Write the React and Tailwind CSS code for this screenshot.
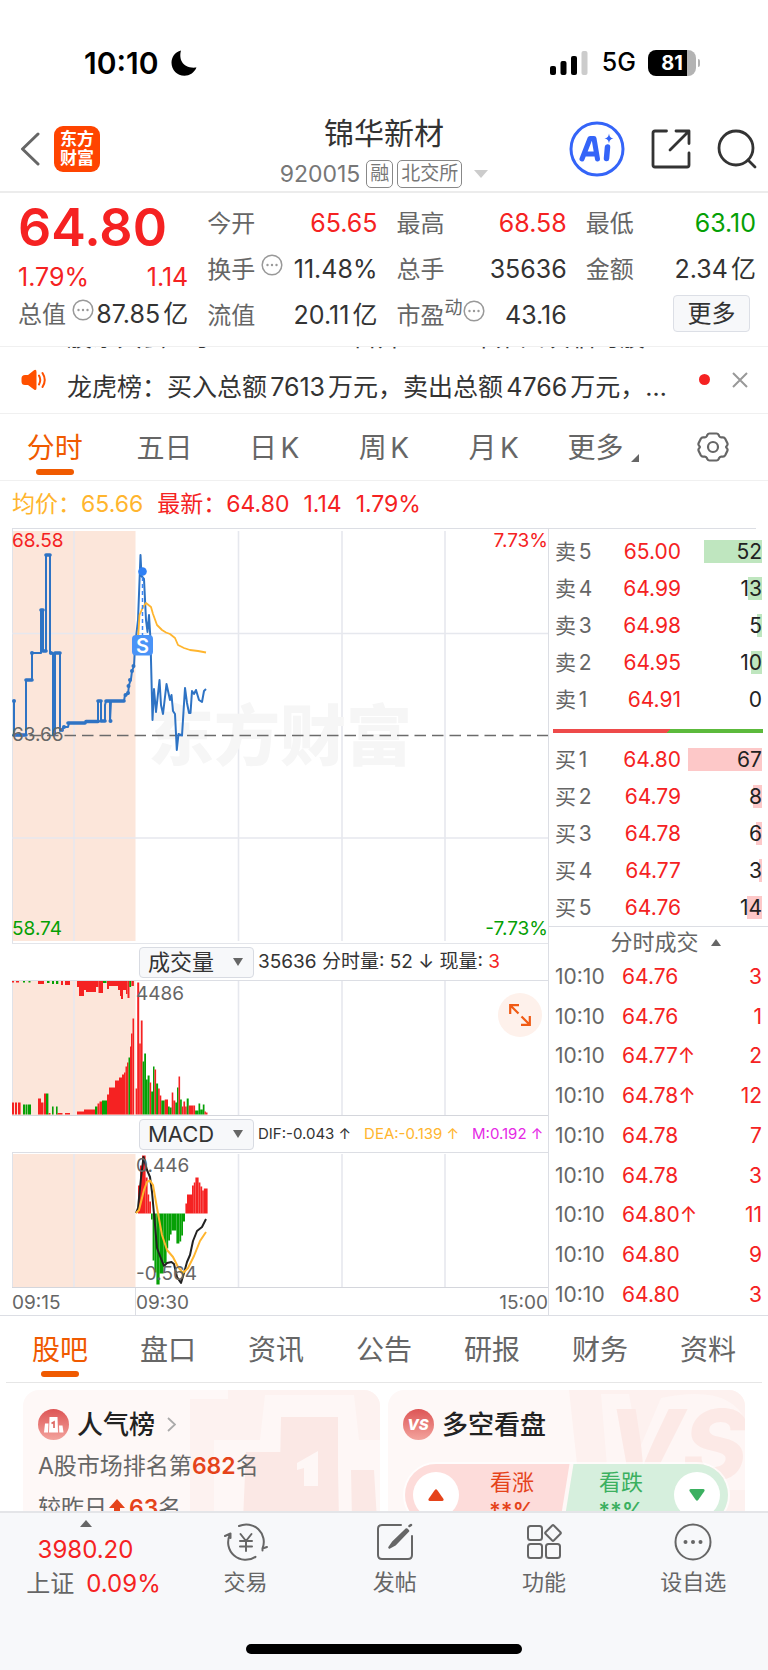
import React from 'react';

const R = '#f52222';
const G = '#05a005';

const sells = [
  ['5', '65.00', 52, 58],
  ['4', '64.99', 13, 14],
  ['3', '64.98', 5, 5],
  ['2', '64.95', 10, 11],
  ['1', '64.91', 0, 0],
];
const buys = [
  ['1', '64.80', 67, 74],
  ['2', '64.79', 8, 9],
  ['3', '64.78', 6, 6],
  ['4', '64.77', 3, 3],
  ['5', '64.76', 14, 15],
];
const ticks = [
  ['64.76', false, 3],
  ['64.76', false, 1],
  ['64.77', true, 2],
  ['64.78', true, 12],
  ['64.78', false, 7],
  ['64.78', false, 3],
  ['64.80', true, 11],
  ['64.80', false, 9],
  ['64.80', false, 3],
];

// [x, width, height, colour]
const volume = [
  [12, 2, 12, R], [15, 2, 12, R], [18, 2.6, 12, R],
  [23, 2, 10, G], [25.5, 2, 10, G], [28, 3, 10, G],
  [38, 3, 16, R], [41, 2.5, 12, R], [44, 2, 21, R], [46, 2.4, 21, G], [48.5, 2, 1.5, R],
  [52, 1.6, 8, G], [56, 1.6, 8, G], [57.5, 5, 1.5, R], [65, 5, 1.5, R],
  [77, 7, 3, R], [84, 11, 5, R], [95, 2.5, 8, G], [97.5, 2, 11, R], [99.5, 3, 13, R],
  [102, 5, 14, G], [107, 2, 20, R], [109, 6, 27, R], [115, 4, 34, R], [119, 3, 37, R],
  [122, 2, 40, R], [124, 1.5, 42, R], [125.5, 1.5, 48, R], [127, 1.5, 52, R], [128.5, 1.5, 57, G],
  [130, 1, 68, R], [131, 1.5, 81, R], [132.5, 1.6, 96, R],
  [135.6, 1.6, 26, R], [137.2, 2, 132, R], [139.2, 1.6, 71, R], [140.8, 1.8, 94, R],
  [142.6, 1.6, 53, G], [144.2, 1.8, 61, G], [146, 1.6, 35, G], [147.6, 2, 39, G],
  [149.6, 1.6, 32, R], [151.2, 1.8, 23, G], [153, 1.5, 48, G], [154.5, 1.6, 45, R],
  [156.1, 2, 31, G], [158.1, 1.6, 26, R], [159.7, 1.6, 19, R], [161.3, 3.4, 14, G],
  [164.7, 3.3, 15, R], [168, 1.7, 8, G], [169.7, 2, 7, G], [171.7, 1.6, 22, R],
  [173.3, 2, 14, R], [175.3, 1.7, 12, G], [177, 1.5, 27, G], [178.5, 1.6, 38, R],
  [180.1, 1.7, 15, G], [181.8, 1.6, 8, R], [183.4, 1.7, 13, R], [185.1, 1.6, 8, R],
  [186.7, 2, 16, G], [188.7, 4.6, 9, R], [193.3, 1.8, 9, R], [195.1, 3.4, 4, G],
  [198.5, 1.7, 11, G], [200.2, 2.6, 5, G], [202.8, 1.7, 10, G], [204.5, 1.4, 3, R], [205.9, 1.6, 2, R],
];
const hanging = [
  [12, 2, 1.5, R], [16, 3, 1.5, R], [23, 2, 1.5, G], [28.5, 2, 1.5, G], [38, 6, 3, R],
  [47, 2.5, 2, G], [52, 2, 3, G], [56, 2.3, 3, G], [61, 2, 4, R], [65, 5, 4, R],
  [77, 2, 6, R], [79, 5, 15, R], [84, 2, 9, R], [86, 10, 11, R], [96, 2.5, 6, R],
  [98.5, 4.5, 12, R], [103, 3.5, 2, G], [107, 2, 8, R], [109, 9, 5, R], [118, 2, 9, R],
  [120, 1, 15, R], [121, 2, 18, R], [123, 3, 9, R], [126, 1.5, 13, R], [127.5, 2, 17, R],
  [129.3, 1.8, 6, G], [131.4, 2.5, 5, R],
];
const macd = [
  [138, 2, 28, R], [140, 2, 48, R], [142, 3.6, 58, R], [145.6, 2, 36, R], [147.6, 1.6, 19, R], [149.2, 1.8, 12, R],
  [151, 1.6, -6, G], [152.6, 1.8, -47, G], [154.4, 2, -59, G], [156.4, 3.2, -71, G], [159.6, 4, -60, G],
  [163.6, 3, -50, G], [166.6, 1.6, -35, G], [168.2, 1.8, -27, G], [170, 1.6, -21, G], [171.6, 4.8, -17, G],
  [176.4, 3, -30, G], [179.4, 1.8, -28, G], [181.2, 1.8, -22, G], [183, 2, -8, G],
  [185.4, 1.6, 10, R], [187, 5, 19, R], [192, 1.8, 28, R], [193.8, 1.6, 31, R], [195.4, 3.2, 36, R],
  [198.6, 1.8, 31, R], [200.4, 1.8, 27, R], [202.2, 1.6, 23, R], [203.8, 3.8, 25, R],
];

const Grid = ({ y1, y2 }) => (
  <g>
    <rect x="12" y={y1} width="123.5" height={y2 - y1} fill="#fce6da" />
    {[74, 238.5, 342, 445].map((x) => (
      <line key={x} x1={x} x2={x} y1={y1} y2={y2} stroke="#e6e8ee" strokeWidth="1.6" />
    ))}
    <line x1="12.5" x2="12.5" y1={y1 - 2} y2={y2 + 2} stroke="#e0e2e8" />
  </g>
);

function More() {
  return (
    <svg viewBox="0 0 22 22" className="mb-3 size-[22px] shrink-0" fill="none" stroke="#999" strokeWidth="1.5">
      <circle cx="11" cy="11" r="9.8" />
      <g fill="#999" stroke="none"><circle cx="6.5" cy="11" r="1.2" /><circle cx="11" cy="11" r="1.2" /><circle cx="15.5" cy="11" r="1.2" /></g>
    </svg>
  );
}

function Stat({ label, value, color = 'text-[#333]', more, sup }) {
  return (
    <div className="flex h-[46px] items-center whitespace-nowrap">
      <span className="text-[#666]">{label}</span>
      {sup && <span className="mb-4 text-lg text-[#666]">{sup}</span>}
      {more && <span className={sup ? 'mt-0.5' : 'ml-1.5 mt-0.5'}><More /></span>}
      <span className={`ml-auto text-[25px] ${color}`}>{value}</span>
    </div>
  );
}

function StatusBar() {
  return (
    <div className="flex h-24 items-center justify-between pt-[30px] pr-17 pl-[84px]">
      <div className="flex items-center gap-3 text-[30px] font-semibold text-black">
        <span>10:10</span>
        <svg viewBox="0 0 26 26" className="size-[26px]"><path d="M10 0.5C7.500 9 11.500 19 25.500 17.500C23 23 18.500 25.700 13.500 25.700C6 25.700 0.500 20 0.500 12.800C0.500 7 4 2 10 0.500Z" /></svg>
      </div>
      <div className="flex items-center text-black">
        <svg viewBox="0 0 38 24" className="mr-3.5 h-6 w-[38px]">
          <rect x="0" y="15" width="6" height="9" rx="2" /><rect x="10.500" y="10" width="6" height="14" rx="2" />
          <rect x="21" y="5" width="6" height="19" rx="2" /><rect x="31.500" y="0" width="6" height="24" rx="2" fill="#ccc" />
        </svg>
        <span className="mr-3 text-[25px] font-medium">5G</span>
        <div className="flex items-center">
          <span className="flex h-[26px] w-[48px] items-center justify-center rounded-lg bg-[linear-gradient(90deg,#000_81%,#b3b3b3_81%)] text-xl font-bold text-white">81</span>
          <span className="ml-0.5 h-2 w-0.5 rounded-r bg-[#b3b3b3]" />
        </div>
      </div>
    </div>
  );
}

function Header() {
  return (
    <header className="grid h-[97px] grid-cols-[1fr_auto_1fr] border-b-2 border-[#ececec]">
      <div className="flex items-center gap-3.5 pt-[11px] pl-5">
        <button aria-label="返回">
          <svg viewBox="0 0 20 34" className="h-[34px] w-5" fill="none" stroke="#666" strokeWidth="3" strokeLinecap="round" strokeLinejoin="round"><path d="M18 2 2.500 17 18 32" /></svg>
        </button>
        <a href="#home" className="flex size-[46px] flex-col items-center justify-center rounded-[9px] bg-[#ff4400] text-[17px] leading-[19px] font-bold text-white"><span>东方</span><span>财富</span></a>
      </div>
      <div className="flex flex-col items-center pt-[17px]">
        <h1 className="text-[30px] leading-10 text-[#333]">锦华新材</h1>
        <div className="mt-[7px] flex h-7 items-center text-[#777]">
          <span className="mr-1.5 text-[23px]">920015</span>
          <span className="mr-1 flex h-7 items-center rounded-[5px] border border-[#888] px-[3px] text-[19px]">融</span>
          <span className="mr-3 flex h-7 items-center rounded-[5px] border border-[#888] px-[3px] text-[19px]">北交所</span>
          <svg viewBox="0 0 14 8" className="h-2 w-3.5" fill="#ccc"><path d="M0 0H14L7 8Z" /></svg>
        </div>
      </div>
      <div className="flex items-center justify-end gap-[26px] pt-[11px] pr-[11px]">
        <button aria-label="Ai">
          <svg viewBox="0 0 56 56" className="size-14" fill="none" stroke="#3464f8">
            <circle cx="28" cy="28" r="26" strokeWidth="3" />
            <path d="M13 38 21 17.500H25L28.500 38M16 33H27" strokeWidth="5" strokeLinejoin="round" strokeLinecap="round" />
            <path d="M38.500 26 37.500 37.500" strokeWidth="5.500" strokeLinecap="round" />
            <path d="M40 12.500C40.700 16 41.500 16.800 44.500 17.500C41.500 18.200 40.700 19 40 22.500C39.300 19 38.500 18.200 35.500 17.500C38.500 16.800 39.300 16 40 12.500Z" fill="#3464f8" stroke="none" />
          </svg>
        </button>
        <button aria-label="分享">
          <svg viewBox="0 0 40 40" className="size-10" fill="none" stroke="#333" strokeWidth="2.800" strokeLinecap="round" strokeLinejoin="round">
            <path d="M15.500 2H4Q2 2 2 4V36Q2 38 4 38H36Q38 38 38 36V24M19 21 37.500 2.500M25 2H38V14.500" />
          </svg>
        </button>
        <button aria-label="搜索">
          <svg viewBox="0 0 40 40" className="size-10" fill="none" stroke="#333" strokeWidth="2.800" strokeLinecap="round"><circle cx="19" cy="19" r="17" /><path d="M31 31 38 38" /></svg>
        </button>
      </div>
    </header>
  );
}

function Quote() {
  return (
    <section className="grid grid-cols-4 gap-x-[19px] border-b border-[#f0f0f0] pr-3 pb-[7px] pl-[18px] text-2xl">
      <div className="flex flex-col pt-[7px] whitespace-nowrap">
        <div className="h-14 text-[52px] leading-14 font-semibold text-[#f52222]">64.80</div>
        <div className="flex h-11 items-center justify-between text-[25px] text-[#f52222]"><span>1.79%</span><span>1.14</span></div>
        <div className="-mt-2 flex h-[46px] items-center">
          <span className="text-[#666]">总值</span><span className="mt-0.5 ml-1.5"><More /></span><span className="ml-auto text-[25px] text-[#333]">87.85亿</span>
        </div>
      </div>
      <div className="pt-2"><Stat label="今开" value="65.65" color="text-[#f52222]" /><Stat label="换手" more value="11.48%" /><Stat label="流值" value="20.11亿" /></div>
      <div className="pt-2"><Stat label="最高" value="68.58" color="text-[#f52222]" /><Stat label="总手" value="35636" /><Stat label="市盈" sup="动" more value="43.16" /></div>
      <div className="pt-2">
        <Stat label="最低" value="63.10" color="text-[#05a005]" /><Stat label="金额" value="2.34亿" />
        <div className="flex h-[46px] items-start justify-end pt-0.5 pr-1.5"><button className="h-[37px] w-[77px] rounded-[4px] border border-[#dcdfe6] bg-[#f7f8fa] text-2xl leading-8 text-[#333]">更多</button></div>
      </div>
    </section>
  );
}

function News() {
  return (
    <section className="flex h-[67px] items-start border-b border-[#f0f0f0] pr-5 pl-5 text-[#333]">
      <svg viewBox="0 0 28 22" className="mt-[22px] h-[22px] w-7 shrink-0" fill="#ff5000">
        <path d="M5 6H8L14 1.200Q16.500 0 16.500 3V19Q16.500 22 14 20.500L8 16H5Q1.500 16 1.500 12.500V9.500Q1.500 6 5 6Z" />
        <path d="M19 6.500Q21.500 11 19 15.500M22.500 4Q27 11 22.500 18" fill="none" stroke="#ff5000" strokeWidth="2" strokeLinecap="round" />
      </svg>
      <div className="ml-[19px] flex h-[66px] min-w-0 flex-1 flex-col justify-end overflow-hidden text-[25px] whitespace-nowrap">
        <p className="h-6 leading-6">股东大会：于2025-11-17召开2025年第四次临时股</p>
        <p className="mt-5 mb-2 h-9 shrink-0 leading-9">龙虎榜：买入总额7613万元，卖出总额4766万元，…</p>
      </div>
      <span className="mt-[27px] ml-2 size-[11px] rounded-full bg-[#f52222]" />
      <button aria-label="关闭" className="mt-[25px] ml-[22px]"><svg viewBox="0 0 16 16" className="size-4" stroke="#999" strokeWidth="2"><path d="M1 1 15 15M15 1 1 15" /></svg></button>
    </section>
  );
}

function Tab({ active, children }) {
  return (
    <button className={`flex flex-col items-center justify-end text-[28px] leading-9 ${active ? 'text-[#f05a00]' : 'text-[#666]'}`}>
      <span className="flex">{children}</span>
      <span className={`mt-[3px] mb-[5px] h-1.5 w-[38px] rounded-full ${active ? 'bg-[#f05a00]' : ''}`} />
    </button>
  );
}

function PeriodTabs() {
  return (
    <nav className="grid h-[67px] grid-cols-7 border-b border-[#f0f0f0]">
      <Tab active>分时</Tab><Tab>五日</Tab><Tab>日K</Tab><Tab>周K</Tab><Tab>月K</Tab>
      <Tab>更多<svg viewBox="0 0 8 8" className="mt-6 ml-2 size-2" fill="#666"><path d="M8 0V8H0Z" /></svg></Tab>
      <button aria-label="设置" className="flex items-center justify-center">
        <svg viewBox="0 0 32 30" className="h-[30px] w-8" fill="none" stroke="#666" strokeWidth="2.200" strokeLinejoin="round">
          <path d="M12.500 1.500H19.500Q21 1.500 21.700 3L22.300 4.300Q23 5.500 24.500 5.400L26 5.400Q27.500 5.400 28.200 6.700L30.300 11Q31 12.500 30 13.600L29.500 14.200Q28.800 15 29.500 15.800L30 16.400Q31 17.500 30.300 19L28.200 23.300Q27.500 24.600 26 24.600L24.500 24.600Q23 24.500 22.300 25.700L21.700 27Q21 28.500 19.500 28.500H12.500Q11 28.500 10.300 27L9.700 25.700Q9 24.500 7.500 24.600L6 24.600Q4.500 24.600 3.800 23.300L1.700 19Q1 17.500 2 16.400L2.500 15.800Q3.200 15 2.500 14.200L2 13.600Q1 12.500 1.700 11L3.800 6.700Q4.500 5.400 6 5.400L7.500 5.400Q9 5.500 9.700 4.300L10.300 3Q11 1.500 12.500 1.500Z" />
          <circle cx="16" cy="15" r="5" />
        </svg>
      </button>
    </nav>
  );
}

function PriceChart() {
  return (
    <div className="relative h-[415px] border-b border-[#e3e5ea] text-[19px] leading-5">
      <svg viewBox="12 529 536 414" preserveAspectRatio="none" className="block size-full">
        <Grid y1={531} y2={941} />
        <text x="148" y="760" fontSize="66" fontWeight="900" fill="#f6f6f6" fontFamily="Noto Sans CJK SC">东方财富</text>
        <path d="M12 633.500H548M12 838H548" stroke="#e6e8ee" strokeWidth="1.6" />
        <path d="M12 735.500H548" stroke="#6b6b6b" strokeWidth="1.300" strokeDasharray="11.500 6" />
        <path
          d="M14 701V735H26V680H32V653H41V610H43V651H46V555H50V653H53V735H55V653H60V731L64 727H68L69 723H85L88 721H98V701H101V721H105V705L106 701H110V721L111 701H124L125 695L128 694L129 685L131 679L132 671L134 666L135 646L138 620L140.500 555L141.500 576L144 579L146 620L147.500 632L149 615L150.500 640L152.500 720L154 689L156 712L159.500 680L161 705L163 714L166.500 684L170 700L171.500 695L173 711L175 714L176.800 750L178.500 734L182 735.500L185 688L187 703L189 713H190.500L192 691L194 694L196 690L199 700L202 702L204 691L206 689"
          fill="none" stroke="#2e73c4" strokeWidth="2" strokeLinejoin="round"
        />
        <path d="M14 735H26M26 680H32M41 610H43M43 651H46M46 555H50M55 653H60M68 723H85M86 721.500H98M98 701H101M101 721H105M106 701H124" stroke="#2e73c4" strokeWidth="3.600" strokeLinecap="round" />
        <g fill="#2e73c4">{[[14, 701], [32, 653], [51, 653], [110.500, 721], [62, 730], [64, 727], [125.500, 695], [128, 693], [128.500, 686], [130, 680], [132, 671], [133.500, 666]].map(([x, y]) => <circle key={`${x}-${y}`} cx={x} cy={y} r="2" />)}</g>
        <path d="M138 640L139.500 615L143 607L146 603L151 607L153 614L157 625L162 630L166 632.500L170 634L175 638L178 645L184 648L190 650L198 651L206 652.500" fill="none" stroke="#ffb52e" strokeWidth="1.800" strokeLinejoin="round" />
        <path d="M142.500 577V635" stroke="#3b86f6" strokeWidth="1.500" strokeDasharray="4 3" />
        <circle cx="142.500" cy="571.500" r="4.300" fill="#2f80f5" />
        <rect x="132" y="635" width="21" height="20.500" rx="4" fill="#4a93f7" />
        <text x="142.500" y="652.500" textAnchor="middle" fontSize="20" fontWeight="600" fill="#fff">S</text>
      </svg>
      <span className="absolute top-0.5 left-0 text-[#f52222]">68.58</span>
      <span className="absolute top-0.5 right-0 text-[#f52222]">7.73%</span>
      <span className="absolute top-[196px] left-0 text-[#666]">63.66</span>
      <span className="absolute bottom-1 left-0 text-[#05a005]">58.74</span>
      <span className="absolute right-0 bottom-1 text-[#05a005]">-7.73%</span>
    </div>
  );
}

function Picker({ label, options, children }) {
  return (
    <div className="flex h-[37px] items-center border-b border-[#dcdee4] pl-[127px] whitespace-nowrap">
      <label className="relative mr-1 shrink-0">
        <select aria-label={label} className="block h-[31px] w-[115px] appearance-none rounded-[4px] border border-[#d8dbe2] bg-[#f7f8fa] pl-2 text-[22px] leading-7 text-[#333]">
          {options.map((o) => <option key={o}>{o}</option>)}
        </select>
        <svg viewBox="0 0 10 8" className="pointer-events-none absolute top-[11px] right-[11px] h-2 w-2.5" fill="#666"><path d="M0 0H10L5 8Z" /></svg>
      </label>
      {children}
    </div>
  );
}

function Charts() {
  return (
    <div className="ml-3 min-w-0 flex-1 border-r border-[#dcdee4]">
      <PriceChart />
      <Picker label="副图指标一" options={['成交量', 'MACD']}>
        <span className="text-[19px] text-[#333]">35636 分时量: 52 ↓ 现量: <span className="text-[#f52222]">3</span></span>
      </Picker>
      <div className="relative h-[135px] border-b border-[#d4d6dc] text-[19px] leading-5 text-[#666]">
        <svg viewBox="12 981 536 134" preserveAspectRatio="none" className="block size-full">
          <Grid y1={981} y2={1115} />
          {volume.map(([x, w, h, c]) => <rect key={x} x={x} y={1114.5 - h} width={w} height={h} fill={c} />)}
          {hanging.map(([x, w, h, c]) => <rect key={x} x={x} y="981" width={w} height={h} fill={c} />)}
        </svg>
        <span className="absolute top-[3px] left-[124px]">4486</span>
        <button aria-label="全屏" className="absolute top-3 right-1.5 flex size-11 items-center justify-center rounded-full bg-[#fef1eb]">
          <svg viewBox="0 0 24 24" className="size-6" fill="none" stroke="#f05a14" strokeWidth="2.200"><path d="M11 2.200H2.200V11M2.500 2.500 10.500 10.500M13 21.800H21.800V13M21.500 21.500 13.500 13.500" /></svg>
        </button>
      </div>
      <Picker label="副图指标二" options={['MACD', '成交量']}>
        <span className="flex gap-[13px] text-[15px]"><span className="text-[#333]">DIF:-0.043 ↑</span><span className="text-[#ffb52e]">DEA:-0.139 ↑</span><span className="text-[#e528e5]">M:0.192 ↑</span></span>
      </Picker>
      <div className="relative h-[135px] border-b border-[#d4d6dc] text-[19px] leading-5 text-[#666]">
        <svg viewBox="12 1153 536 134" preserveAspectRatio="none" className="block size-full">
          <Grid y1={1154} y2={1287} />
          {macd.map(([x, w, h, c]) => <rect key={x} x={x} y={h > 0 ? 1213.5 - h : 1213.5} width={w} height={Math.abs(h)} fill={c} />)}
          <path d="M136 1213L138 1208L141 1178L143.500 1157L147 1170L150 1177L152 1192L155 1225L157 1248L160 1256L164 1266L167 1263L171.500 1262L174 1264L177 1277L181 1283L184 1273L187 1262L190 1255L193 1241L197 1231L202 1227L206 1219" fill="none" stroke="#222" strokeWidth="2" strokeLinejoin="round" />
          <path d="M136 1213L139 1210L144 1190L147 1182L150 1180.500L153 1185L157 1208L162 1235L167 1250L173 1257L178 1267L183 1273L188 1268L194 1256L200 1241L206 1232" fill="none" stroke="#ffb52e" strokeWidth="2" strokeLinejoin="round" />
        </svg>
        <span className="absolute top-[3px] left-[124px]">0.446</span>
        <span className="absolute bottom-[3px] left-[124px]">-0.564</span>
      </div>
      <div className="flex h-[27px] text-[19px] leading-[29px] text-[#666]">
        <span className="w-[124px] border-r border-[#dcdee4]">09:15</span><span>09:30</span><span className="ml-auto">15:00</span>
      </div>
    </div>
  );
}

function Book({ side, rows, bar }) {
  return (
    <table className="w-full table-fixed">
      <tbody>
        {rows.map(([n, price, qty, w]) => (
          <tr key={n} className="h-[37px]">
            <th className="w-12 text-left font-normal text-[#666]">{side}{n}</th>
            <td className="w-[78px] text-right text-[#f52222]">{price}</td>
            <td className="text-right text-[#222]">
              <span className="relative block h-[23px] w-full leading-[23px]">
                <span className={`absolute top-0 right-0 h-full ${bar}`} style={{ width: w }} />
                <span className="relative">{qty}</span>
              </span>
            </td>
          </tr>
        ))}
      </tbody>
    </table>
  );
}

function Depth() {
  return (
    <div className="w-[219px] shrink-0 text-[21px] leading-6">
      <div className="px-1.5 pt-1"><Book side="卖" rows={sells} bar="bg-[#bfe6bf]" /></div>
      <div className="mt-[11px] mr-[5px] mb-2 ml-1 h-1 bg-[linear-gradient(135deg,#ee4a4a_55%,#5cba3c_55%)]" />
      <div className="px-1.5"><Book side="买" rows={buys} bar="bg-[#fdc8c8]" /></div>
      <button className="flex h-[31px] w-full items-center justify-center gap-3 border-t border-[#dcdee4] pl-3.5 text-[22px] leading-7 text-[#666]">
        分时成交<svg viewBox="0 0 10 7" className="h-[7px] w-2.5" fill="#666"><path d="M0 7H10L5 0Z" /></svg>
      </button>
      <div className="px-1.5">
        <table className="h-[358px] w-full table-fixed">
          <tbody>
            {ticks.map(([price, up, qty], i) => (
              <tr key={i}>
                <td className="w-[67px] text-[#666]">10:10</td>
                <td className="w-[90px] text-[#f52222]">{price}{up && '↑'}</td>
                <td className="text-right text-[#f52222]">{qty}</td>
              </tr>
            ))}
          </tbody>
        </table>
      </div>
    </div>
  );
}

function RankCard() {
  return (
    <a href="#rank" className="relative block h-40 flex-1 overflow-hidden rounded-2xl bg-[#fef8f7] px-[15px] pt-[18px] [text-autospace:no-autospace]">
      <svg viewBox="0 0 190 130" className="absolute top-0 right-0 h-[130px] w-[190px]">
        <path d="M38 0H190V130H0V9H38Z" fill="#fdf2f0" />
        <path d="M75 5H164L169 50H190V130H24V50H70Z" fill="#fef7f6" />
        <path d="M92 27H148V130H90ZM56 62H104V62L103 130H53ZM161 80H184L187 130H162Z" fill="#fbe8e5" />
        <path d="M91 27H147L149 130H89Z" fill="#fbe8e5" />
        <path d="M107 73 128 61V96H114V78L107 80Z" fill="#fef7f6" />
      </svg>
      <div className="relative flex h-8 items-center text-[26px] font-medium text-[#222]">
        <svg viewBox="0 0 31 31" className="mr-2 size-[31px]">
          <defs><linearGradient id="rg" x1="0" y1="0" x2="0" y2="1"><stop offset="0" stopColor="#dd5555" /><stop offset="1" stopColor="#f3a39d" /></linearGradient></defs>
          <circle cx="15.500" cy="15.500" r="15.500" fill="url(#rg)" />
          <path d="M11.500 8H19.500L20 23.500H11ZM7 14.500H10.500L10 23.500H6ZM21 16.500H24.500L25.500 23.500H21.300Z" fill="#fff" />
          <path d="M13.500 14.500 16 13V19" fill="none" stroke="#dd6a64" strokeWidth="1.700" />
        </svg>
        人气榜
        <svg viewBox="0 0 9 15" className="ml-3 h-[15px] w-[9px]" fill="none" stroke="#aaa" strokeWidth="1.800"><path d="M1 1 8 7.500 1 14" /></svg>
      </div>
      <p className="relative mt-2.5 flex h-8 items-center text-[23px] text-[#666]">A股市场排名第<b className="font-semibold text-[#e5431a]">682</b>名</p>
      <p className="relative mt-2.5 flex h-8 items-center text-[23px] text-[#666]">
        较昨日
        <svg viewBox="0 0 16 18" className="mr-1 ml-0.5 h-[18px] w-4" fill="#e5431a"><path d="M8 0 16 9H11V18H5V9H0Z" /></svg>
        <b className="font-semibold text-[#e5431a]">63</b>名
      </p>
    </a>
  );
}

function VoteCard() {
  return (
    <div className="relative h-40 flex-1 overflow-hidden rounded-2xl bg-[#fef8f7] px-[15px] pt-[18px]">
      <svg viewBox="0 0 176 130" className="absolute top-0 right-0 h-[130px] w-44">
        <path d="M0 0H176V130H14Z" fill="#fdf1ef" />
        <path d="M32 4H60L70 60 92 8Q160 -6 176 30V100H40Z" fill="#fef6f5" />
        <text x="38" y="90" fontSize="98" fontWeight="800" fontStyle="italic" fill="#fce9e6">VS</text>
      </svg>
      <h2 className="relative flex h-8 items-center gap-2 text-[26px] font-medium text-[#222]">
        <svg viewBox="0 0 31 31" className="size-[31px]">
          <circle cx="15.500" cy="15.500" r="15.500" fill="url(#rg)" />
          <text x="15" y="21" textAnchor="middle" fontSize="15" fontWeight="800" fontStyle="italic" fill="#fff">VS</text>
        </svg>
        多空看盘
      </h2>
      <div className="relative mx-0.5 mt-6 flex h-[62px] overflow-hidden rounded-full text-[22px] leading-7 outline-2 outline-white/70">
        <button className="flex h-full flex-1 gap-[30px] bg-[#fddcda] pt-2 pl-2 [clip-path:polygon(0_0,100%_0,calc(100%-10px)_100%,0_100%)] text-[#e5431a]">
          <span className="flex size-[46px] items-center justify-center rounded-full bg-white"><svg viewBox="0 0 16 12" className="h-3 w-4" fill="#e5431a"><path d="M6.800 1Q8 -0.500 9.200 1L15.500 10Q16 12 14 12H2Q0 12 0.500 10Z" /></svg></span>
          <span className="-mt-1 flex flex-col"><span>看涨</span><b className="font-semibold">**%</b></span>
        </button>
        <button className="-ml-1.5 flex h-full flex-1 justify-end gap-[30px] bg-[#d6efdd] pt-2 pr-2 [clip-path:polygon(10px_0,100%_0,100%_100%,0_100%)] text-[#3bb060]">
          <span className="-mt-1 flex flex-col"><span>看跌</span><b className="font-semibold">**%</b></span>
          <span className="flex size-[46px] items-center justify-center rounded-full bg-white"><svg viewBox="0 0 16 12" className="h-3 w-4" fill="#3bb060"><path d="M6.800 11Q8 12.500 9.200 11L15.500 2Q16 0 14 0H2Q0 0 0.500 2Z" /></svg></span>
        </button>
      </div>
    </div>
  );
}

function NavItem({ label, children }) {
  return (
    <button className="flex flex-1 flex-col items-center pt-[9px] text-[22px] leading-8 text-[#666]">
      <svg viewBox="0 0 40 40" className="mb-1 size-10 overflow-visible" fill="none" stroke="#666" strokeWidth="2" strokeLinecap="round" strokeLinejoin="round">{children}</svg>
      {label}
    </button>
  );
}

function BottomBar() {
  return (
    <footer className="h-[159px] border-t-2 border-[#e4e5e8] bg-[#f7f8fa]">
      <div className="flex">
        <a href="#index" className="flex w-[171px] flex-col items-center pt-[7px] text-2xl leading-[34px] text-[#f52222]">
          <svg viewBox="0 0 12 7" className="h-[7px] w-3" fill="#666"><path d="M0 7H12L6 0Z" /></svg>
          <span className="mt-1.5">3980.20</span>
          <span className="ml-4 flex gap-3 whitespace-nowrap"><span className="text-[#666]">上证</span>0.09%</span>
        </a>
        <NavItem label="交易">
          <path d="M13 4A17.500 17.500 0 0 1 36.500 26.500M36.500 28.500V26.500L41 25M29.500 34.800A17.500 17.500 0 0 1 4 12.500M-1 14 4.500 11.500V16" />
          <path d="M14.500 12 20 19 25.500 12M20 19V29M14 19H26M14 24.500H26" />
        </NavItem>
        <NavItem label="发帖">
          <path d="M26 3H7Q3 3 3 7V33Q3 37 7 37H33Q37 37 37 33V14" /><path d="M34.500 4 36 3M31.500 7.500 18 20.500 14.500 25.500 20 22.500 33 9Z" fill="#666" strokeWidth="2.500" />
        </NavItem>
        <NavItem label="功能">
          <rect x="4" y="4" width="14" height="14" rx="2.500" /><rect x="4" y="22" width="14" height="14" rx="2.500" /><rect x="22" y="22" width="14" height="14" rx="2.500" />
          <path d="M28.200 3.500Q29 2.800 29.800 3.500L36.500 10.200Q37.200 11 36.500 11.800L29.800 18.500Q29 19.200 28.200 18.500L21.500 11.800Q20.800 11 21.500 10.200Z" />
        </NavItem>
        <NavItem label="设自选">
          <circle cx="20" cy="20" r="17.500" /><g fill="#666" stroke="none"><circle cx="12.500" cy="20" r="2" /><circle cx="20" cy="20" r="2" /><circle cx="27.500" cy="20" r="2" /></g>
        </NavItem>
      </div>
      <div className="mx-auto mt-[43px] h-2.5 w-[276px] rounded-full bg-black" />
    </footer>
  );
}

export default function App() {
  return (
    <div className="w-full overflow-hidden bg-white font-['Inter','Noto_Sans_CJK_SC',sans-serif] [text-autospace:normal]">
      <StatusBar />
      <Header />
      <Quote />
      <News />
      <PeriodTabs />
      <div className="mx-3 flex h-12 items-center border-b border-[#dcdee4] text-[23px] whitespace-nowrap text-[#f52222]">
        <span className="mr-3.5 text-[#ffb52e]">均价：65.66</span><span className="mr-3.5">最新：64.80</span><span className="mr-3.5">1.14</span><span>1.79%</span>
      </div>
      <main className="flex border-b border-[#dcdee4]"><Charts /><Depth /></main>
      <nav className="mx-1.5 grid h-[67px] grid-cols-7 border-b border-[#e6e6e6]">
        <Tab active>股吧</Tab><Tab>盘口</Tab><Tab>资讯</Tab><Tab>公告</Tab><Tab>研报</Tab><Tab>财务</Tab><Tab>资料</Tab>
      </nav>
      <section className="flex h-32 gap-2 overflow-hidden px-[23px] pt-[7px]"><RankCard /><VoteCard /></section>
      <BottomBar />
    </div>
  );
}
